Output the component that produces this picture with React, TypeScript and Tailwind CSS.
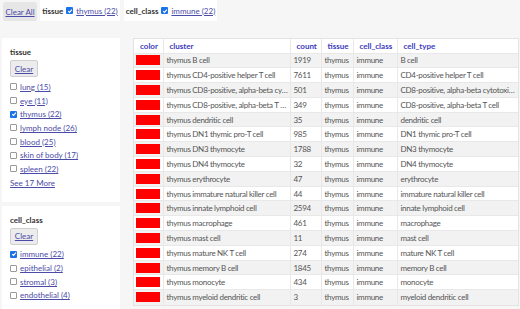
import React from "react";

const ROWS = [
  ["thymus B cell", 1919, "B cell"],
  ["thymus CD4-positive helper T cell", 7611, "CD4-positive helper T cell"],
  ["thymus CD8-positive, alpha-beta cytotoxic T cell", 501, "CD8-positive, alpha-beta cytotoxic T cell"],
  ["thymus CD8-positive, alpha-beta T cell", 349, "CD8-positive, alpha-beta T cell"],
  ["thymus dendritic cell", 35, "dendritic cell"],
  ["thymus DN1 thymic pro-T cell", 985, "DN1 thymic pro-T cell"],
  ["thymus DN3 thymocyte", 1788, "DN3 thymocyte"],
  ["thymus DN4 thymocyte", 32, "DN4 thymocyte"],
  ["thymus erythrocyte", 47, "erythrocyte"],
  ["thymus immature natural killer cell", 44, "immature natural killer cell"],
  ["thymus innate lymphoid cell", 2594, "innate lymphoid cell"],
  ["thymus macrophage", 461, "macrophage"],
  ["thymus mast cell", 11, "mast cell"],
  ["thymus mature NK T cell", 274, "mature NK T cell"],
  ["thymus memory B cell", 1845, "memory B cell"],
  ["thymus monocyte", 434, "monocyte"],
  ["thymus myeloid dendritic cell", 3, "myeloid dendritic cell"],
] as const;

const TISSUES = [
  ["lung (15)", false],
  ["eye (11)", false],
  ["thymus (22)", true],
  ["lymph node (26)", false],
  ["blood (25)", false],
  ["skin of body (17)", false],
  ["spleen (22)", false],
] as const;

const CLASSES = [
  ["immune (22)", true],
  ["epithelial (2)", false],
  ["stromal (3)", false],
  ["endothelial (4)", false],
] as const;

function Check({ on }: { on: boolean }) {
  if (on)
    return (
      <span className="inline-flex w-[7px] h-[7px] rounded-[1px] bg-[#1a73e8] items-center justify-center shrink-0">
        <svg width="6" height="6" viewBox="0 0 10 10">
          <path d="M2 5.2 L4.2 7.4 L8.2 2.8" fill="none" stroke="white" strokeWidth="1.8" />
        </svg>
      </span>
    );
  return <span className="inline-block w-[7px] h-[7px] rounded-[1px] border border-[#9a9a9a] bg-white shrink-0" />;
}

function Facet({ title, items, more }: { title: string; items: readonly (readonly [string, boolean])[]; more?: string }) {
  return (
    <div className="bg-white pl-[8px] pt-[9px] pb-[12px]">
      <div className="h-[10px] flex items-center text-[8px] font-bold text-[#333]">{title}</div>
      <div className="mt-[3px] h-[17px] w-[28px] flex items-center justify-center bg-[#ececec] border border-[#cfcfcf] rounded-[2px] text-[8px] text-[#4b4ba8] underline">
        Clear
      </div>
      <div className="mt-[3px] flex flex-col">
        {items.map(([label, on]) => (
          <div key={label} className="flex items-center gap-[3px] h-[13.7px] whitespace-nowrap">
            <Check on={on} />
            <span className="text-[8px] text-[#4b4ba8] underline">{label}</span>
          </div>
        ))}
        {more && <div className="h-[13.7px] flex items-center text-[8px] text-[#4b4ba8] underline">{more}</div>}
      </div>
    </div>
  );
}

export default function App() {
  return (
    <div
      className="w-[520px] h-[309px] overflow-hidden bg-[#f6f6f6] text-[#555] leading-none"
      style={{ fontFamily: 'Lato, "Noto Sans", sans-serif' }}
    >
      {/* filter chips */}
      <div className="flex items-start h-[38px] whitespace-nowrap">
        <div className="ml-[3px] mt-[2px] h-[19px] w-[34px] flex items-center justify-center bg-[#e6e6e6] rounded-[3px] text-[8px] text-[#4b4ba8] underline">
          Clear All
        </div>
        <div className="ml-[3px] h-[21px] w-[80px] bg-white flex items-center justify-center gap-[3px] text-[8px]">
          <span className="font-bold text-[#333]">tissue</span>
          <Check on />
          <span className="text-[#4b4ba8] underline">thymus (22)</span>
        </div>
        <div className="ml-[4px] h-[21px] w-[93px] bg-white flex items-center justify-center gap-[3px] text-[8px]">
          <span className="font-bold text-[#333]">cell_class</span>
          <Check on />
          <span className="text-[#4b4ba8] underline">immune (22)</span>
        </div>
      </div>

      <div className="flex items-start">
        {/* sidebar */}
        <div className="ml-[2px] w-[118px] flex flex-col gap-[4px]">
          <Facet title="tissue" items={TISSUES} more="See 17 More" />
          <Facet title="cell_class" items={CLASSES} />
        </div>

        {/* table */}
        <div className="ml-[13px] w-[386px] bg-white border border-[#e3e3e3]">
          <table className="table-fixed w-full border-collapse text-[8px] whitespace-nowrap">
            <colgroup>
              <col className="w-[29px]" />
              <col className="w-[127px]" />
              <col className="w-[31px]" />
              <col className="w-[32px]" />
              <col className="w-[44px]" />
              <col />
            </colgroup>
            <thead>
              <tr className="h-[14px] text-[#3b3bbf] text-left">
                {["color", "cluster", "count", "tissue", "cell_class", "cell_type"].map((h, i) => (
                  <th key={h} className={`pl-[6px] font-bold overflow-hidden ${i > 0 ? "border-l border-[#e8e8e8]" : ""}`}>
                    {h}
                  </th>
                ))}
              </tr>
            </thead>
            <tbody className="tracking-[-0.3px]">
              {ROWS.map(([cluster, count, type], i) => (
                <tr key={cluster} className={`h-[14.8px] ${i % 2 === 0 ? "bg-[#f2f2f2]" : "bg-white"}`}>
                  <td className="pl-[2px] border-t border-[#e8e8e8]">
                    <div className="w-[24px] h-[10px] bg-[#ff0000]" />
                  </td>
                  <td className="pl-[3px] border-l border-t border-[#e8e8e8] overflow-hidden text-ellipsis">{cluster}</td>
                  <td className="pl-[3px] border-l border-t border-[#e8e8e8]">{count}</td>
                  <td className="pl-[3px] border-l border-t border-[#e8e8e8]">thymus</td>
                  <td className="pl-[3px] border-l border-t border-[#e8e8e8]">immune</td>
                  <td className="pl-[3px] border-l border-t border-[#e8e8e8] overflow-hidden text-ellipsis">{type}</td>
                </tr>
              ))}
            </tbody>
          </table>
        </div>
      </div>
    </div>
  );
}
